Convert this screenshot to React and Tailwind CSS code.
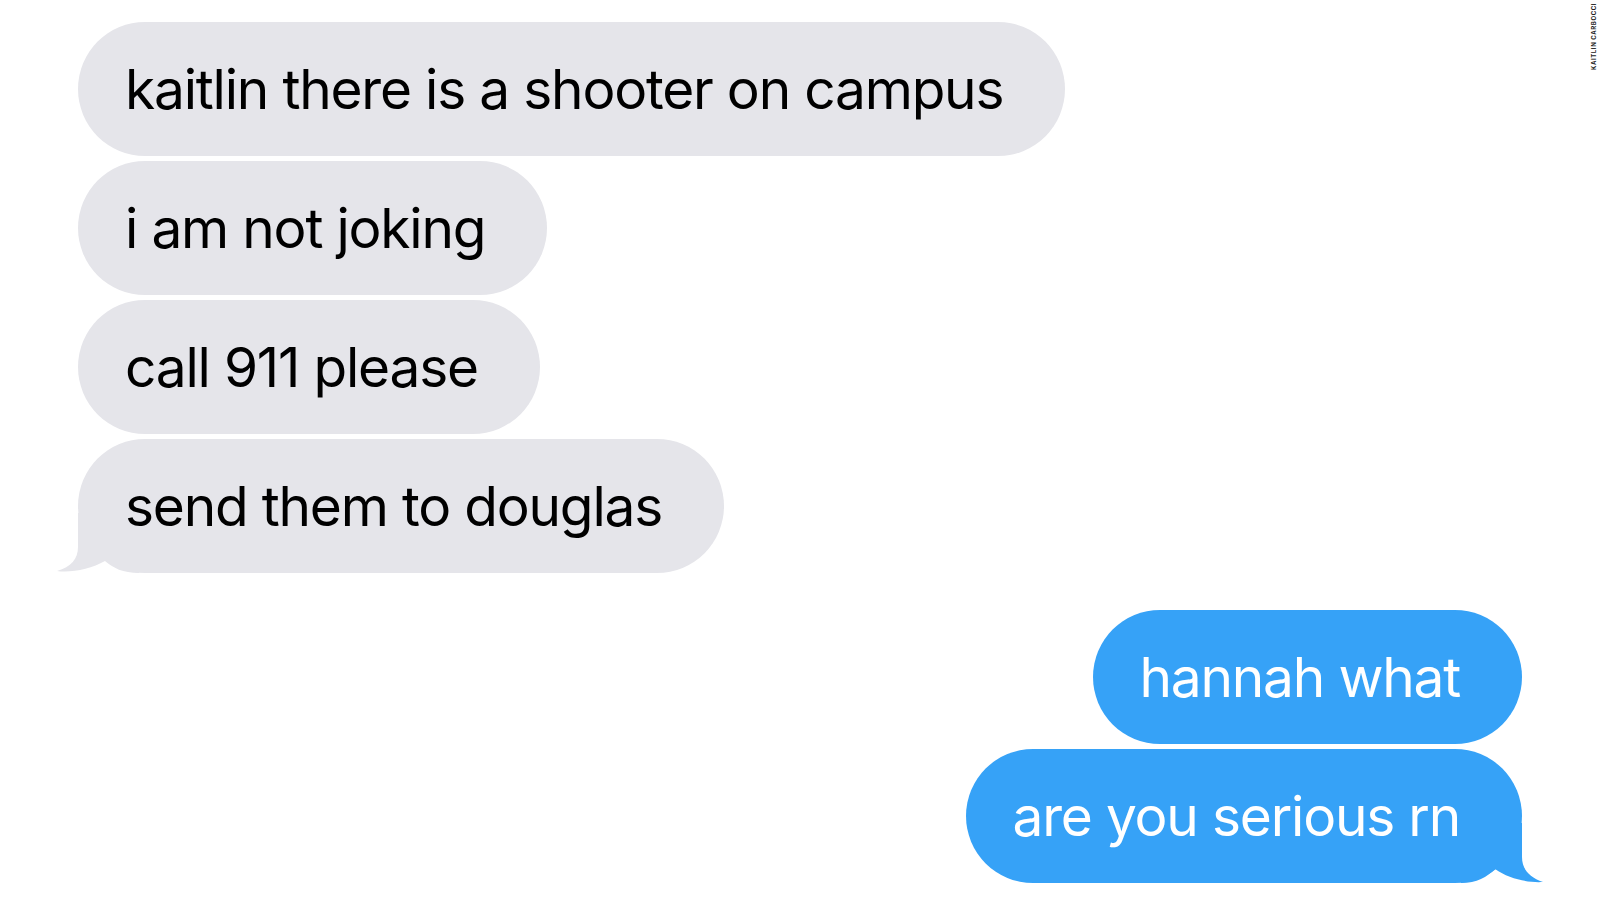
import React from 'react';

const incoming = [
  'kaitlin there is a shooter on campus',
  'i am not joking',
  'call 911 please',
  'send them to douglas',
];

const outgoing = ['hannah what', 'are you serious rn'];

const GreyTail = () => (
  <svg
    className="absolute left-[-21px] bottom-0"
    width="82"
    height="60"
    viewBox="0 0 82 60"
  >
    <path
      d="M21 0 L21 34 C21 46 14 54 0 58 C14 60 34 56 48 48 C56 55 66 60 82 60 L82 0 Z"
      fill="#e5e5ea"
    />
  </svg>
);

const BlueTail = () => (
  <svg
    className="absolute right-[-21px] bottom-0"
    width="82"
    height="60"
    viewBox="0 0 82 60"
  >
    <path
      d="M61 0 L61 34 C61 46 68 54 82 59 C68 60 48 56 34 46 C26 54 16 60 0 60 L0 0 Z"
      fill="#36a2f7"
    />
  </svg>
);

const Bubble = ({ text, mine, tail }) => (
  <div
    className={`relative flex h-[134px] items-center rounded-full pl-[47px] pr-[62px] ${
      mine ? 'bg-[#36a2f7] text-white' : 'bg-[#e5e5ea] text-black'
    }`}
  >
    {tail && (mine ? <BlueTail /> : <GreyTail />)}
    <span className="relative whitespace-nowrap text-[55px] leading-none tracking-[-1.2px]">
      {text}
    </span>
  </div>
);

export default function App() {
  return (
    <div
      className="relative h-[900px] w-[1600px] overflow-hidden bg-white"
      style={{ fontFamily: 'Inter, "Liberation Sans", sans-serif' }}
    >
      <div className="flex flex-col gap-[5px] pl-[78px] pr-[78px] pt-[22px]">
        {incoming.map((t, i) => (
          <div key={t} className="flex justify-start">
            <Bubble text={t} tail={i === incoming.length - 1} />
          </div>
        ))}

        <div className="mt-[32px] flex flex-col gap-[5px]">
          {outgoing.map((t, i) => (
            <div key={t} className="flex justify-end">
              <Bubble text={t} mine tail={i === outgoing.length - 1} />
            </div>
          ))}
        </div>
      </div>

      {/* photo credit */}
      <div className="absolute right-[3px] top-[3px] rotate-180 text-[6px] font-bold uppercase leading-none tracking-[0.6px] text-[#222] [writing-mode:vertical-rl]">
        Kaitlin Carbocci
      </div>
    </div>
  );
}
